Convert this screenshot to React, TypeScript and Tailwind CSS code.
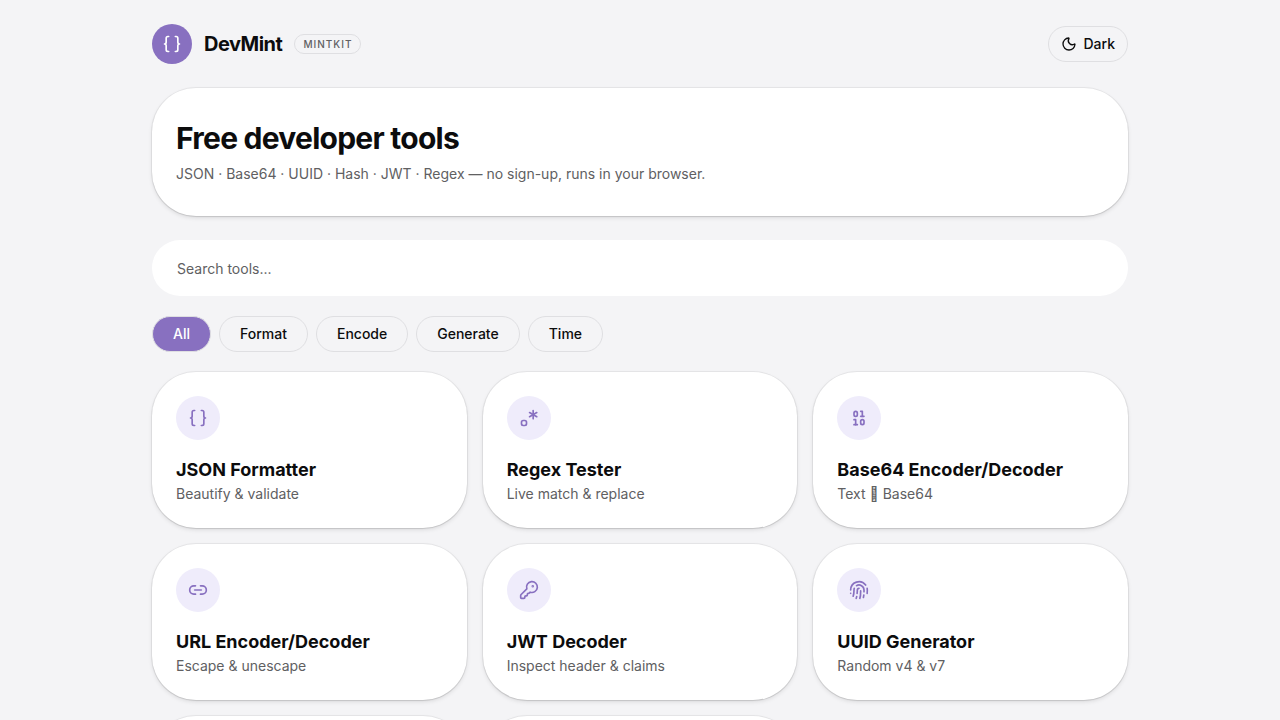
import type { ReactNode } from "react";
import {
  Binary,
  Braces,
  FingerprintPattern,
  KeyRound,
  Link2,
  Moon,
  Regex,
  type LucideIcon,
} from "lucide-react";

type Tool = { name: string; description: string; icon: LucideIcon };

const categories = ["All", "Format", "Encode", "Generate", "Time"];

const tools: Tool[] = [
  { name: "JSON Formatter", description: "Beautify & validate", icon: Braces },
  { name: "Regex Tester", description: "Live match & replace", icon: Regex },
  { name: "Base64 Encoder/Decoder", description: "Text \uF8FF Base64", icon: Binary },
  { name: "URL Encoder/Decoder", description: "Escape & unescape", icon: Link2 },
  { name: "JWT Decoder", description: "Inspect header & claims", icon: KeyRound },
  { name: "UUID Generator", description: "Random v4 & v7", icon: FingerprintPattern },
];

function Surface({ className, children }: { className: string; children?: ReactNode }) {
  return (
    <div
      className={`rounded-[44px] bg-white shadow-[0_0_0_1px_rgba(0,0,0,0.05),0_1px_1px_rgba(0,0,0,0.08),0_2px_4px_rgba(0,0,0,0.1)] ${className}`}
    >
      {children}
    </div>
  );
}

function Header() {
  return (
    <header className="flex h-10 items-center justify-between">
      <div className="flex items-center gap-3">
        <div className="flex size-10 items-center justify-center rounded-full bg-[#8870c0] text-white">
          <Braces size={20} />
        </div>
        <span className="text-xl font-bold tracking-[-0.025em]">DevMint</span>
        <span className="flex h-5 items-center rounded-full border border-[#dfdfe2] px-2 text-[10px] font-medium tracking-widest text-[#606062]">
          MINTKIT
        </span>
      </div>
      <button className="flex h-9 items-center gap-1.5 rounded-full border border-[#dfdfe2] px-3 text-sm font-medium">
        <Moon size={16} />
        Dark
      </button>
    </header>
  );
}

function ToolCard({ tool }: { tool: Tool }) {
  const Icon = tool.icon;
  return (
    <Surface className="p-6">
      <div className="flex size-11 items-center justify-center rounded-full bg-[#efecfb] text-[#8870c0]">
        <Icon size={20} />
      </div>
      <h2 className="mt-4 text-lg font-bold">{tool.name}</h2>
      <p className="text-sm text-[#606062]">{tool.description}</p>
    </Surface>
  );
}

export default function App() {
  return (
    <main className="h-screen overflow-hidden bg-[#f4f4f6] font-['Inter',sans-serif] text-[#0c0c0d] antialiased">
      <div className="mx-auto max-w-5xl px-6 pt-6">
        <Header />

        <Surface className="mt-6 px-6 py-8">
          <h1 className="text-3xl font-bold tracking-[-0.025em]">Free developer tools</h1>
          <p className="mt-2 text-sm text-[#606062]">
            JSON · Base64 · UUID · Hash · JWT · Regex — no sign-up, runs in your browser.
          </p>
        </Surface>

        <input
          className="mt-6 block h-14 w-full rounded-full border border-transparent bg-white px-6 text-sm outline-none placeholder:text-[#606062]"
          placeholder="Search tools..."
        />

        <nav className="mt-5 flex gap-2">
          {categories.map((category, i) => (
            <button
              key={category}
              className={`h-9 rounded-full border border-[#dfdfe2] px-5 text-sm font-medium ${
                i === 0 ? "bg-[#8870c0] text-white" : ""
              }`}
            >
              {category}
            </button>
          ))}
        </nav>

        <section className="mt-5 grid grid-cols-3 gap-4">
          {tools.map((tool) => (
            <ToolCard key={tool.name} tool={tool} />
          ))}
          {/* next row peeks in at the fold */}
          <Surface className="h-[156px]" />
          <Surface className="h-[156px]" />
        </section>
      </div>
    </main>
  );
}
